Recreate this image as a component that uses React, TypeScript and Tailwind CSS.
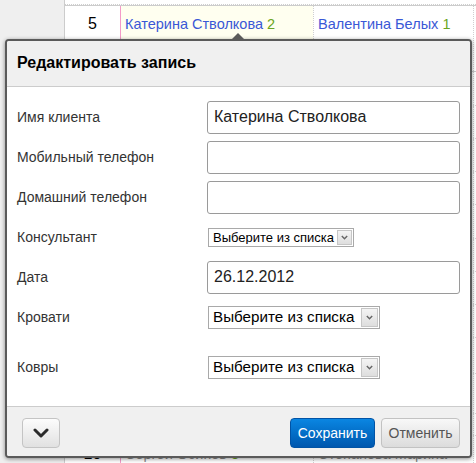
import React from "react";

const fillerRows = [34, 34, 34, 34, 34, 34, 34, 34, 37, 40, 23];

function SelectBox({ small }: { small?: boolean }) {
  // fake native select: text + grey arrow box on the right
  return (
    <div
      className={
        small
          ? "flex items-center w-[146px] h-[19px] border border-[#a9a9a9] bg-white"
          : "flex items-center w-[172px] h-[23px] border border-[#a9a9a9] bg-white"
      }
    >
      <span
        className={
          small
            ? "flex-1 pl-[4px] text-[13px] text-black leading-none whitespace-nowrap overflow-hidden"
            : "flex-1 pl-[4px] text-[15.2px] text-black leading-none whitespace-nowrap overflow-hidden"
        }
      >
        Выберите из списка
      </span>
      <span
        className={
          small
            ? "shrink-0 flex items-center justify-center w-[15px] h-[15px] mr-[1px] border border-[#c6c6c6] bg-linear-to-b from-[#f4f4f4] to-[#dedede]"
            : "shrink-0 flex items-center justify-center w-[17px] h-[19px] mr-[1px] border border-[#c6c6c6] bg-linear-to-b from-[#f4f4f4] to-[#dedede]"
        }
      >
        <svg width="7" height="5" viewBox="0 0 7 5">
          <polyline points="0.8,1 3.5,3.8 6.2,1" fill="none" stroke="#666" strokeWidth="1.4" />
        </svg>
      </span>
    </div>
  );
}

function TextField({ value }: { value?: string }) {
  return (
    <input
      readOnly
      value={value ?? ""}
      className="w-[253px] h-[33px] border border-[#9a9a9a] rounded-[3px] px-[6px] text-[16px] text-[#222] bg-white outline-none"
    />
  );
}

function Row({ label, children, extra }: { label: string; children: React.ReactNode; extra?: string }) {
  return (
    <div className={"flex items-center h-[40px] " + (extra ?? "")}>
      <div className="w-[190px] text-[14px] text-[#333]">{label}</div>
      {children}
    </div>
  );
}

export default function App() {
  return (
    <div className="relative w-[476px] h-[463px] overflow-hidden bg-white font-['Liberation_Sans',Arial,sans-serif]">
      {/* table behind the popover */}
      <div className="flex h-full">
        <div className="w-[65px] bg-[#efefef] border-r border-[#cccccc]" />
        <div className="flex-1 flex flex-col">
          <div className="h-[5px] border-b border-dotted border-[#cfcfcf]" />
          <div className="flex h-[69px] border-t border-b border-[#cccccc] border-b-dotted">
            <div className="w-[55px] pt-[9px] text-center text-[16px] leading-[18px] text-black">5</div>
            <div className="w-[193px] border-l border-[#f49ac8] bg-[#fffff0] pt-[9px] pl-[4px] text-[14.5px] leading-[18px] text-[#3a58d6]">
              Катерина Стволкова <span className="text-[#6aa521]">2</span>
            </div>
            <div className="w-[160px] border-l border-dotted border-[#cfcfcf] pt-[9px] pl-[4px] text-[14.5px] leading-[18px] text-[#3a58d6]">
              Валентина Белых <span className="text-[#6aa521]">1</span>
            </div>
            <div className="flex-1 border-l border-dotted border-[#cfcfcf]" />
          </div>
          {fillerRows.map((h, i) => (
            <div key={i} style={{ height: h }} className="flex border-b border-dotted border-[#d4d4d4]">
              <div className="w-[55px]" />
              <div className="w-[193px] border-l border-[#f49ac8]" />
              <div className="w-[160px] border-l border-dotted border-[#cfcfcf]" />
              <div className="flex-1 border-l border-dotted border-[#cfcfcf]" />
            </div>
          ))}
          <div className="flex flex-1">
            <div className="w-[55px] pt-[9px] text-center text-[16px] leading-[18px] text-black">10</div>
            <div className="w-[193px] border-l border-[#f49ac8] pt-[9px] pl-[4px] text-[14.5px] leading-[18px] text-[#8a8a8a]">
              Сергей Осипов <span className="text-[#6aa521]">3</span>
            </div>
            <div className="w-[160px] border-l border-dotted border-[#cfcfcf] pt-[9px] pl-[4px] text-[14.5px] leading-[18px] text-[#8a8a8a]">
              Степанова Марина
            </div>
            <div className="flex-1 border-l border-dotted border-[#cfcfcf]" />
          </div>
        </div>
      </div>

      {/* edit popover */}
      <div className="absolute left-[5px] top-[39px] w-[467px] h-[419px] flex flex-col border-2 border-[#5a5a5a] rounded-[4px] bg-white shadow-[0_1px_4px_rgba(0,0,0,0.45)] overflow-hidden">
        <div className="h-[46px] flex items-center pl-[10px] pb-[2px] bg-[#f0f0f0] border-b border-[#cccccc]">
          <h2 className="text-[16px] font-bold text-black">Редактировать запись</h2>
        </div>

        <div className="flex-1 pt-[10px] px-[10px]">
          <Row label="Имя клиента">
            <TextField value="Катерина Стволкова" />
          </Row>
          <Row label="Мобильный телефон">
            <TextField />
          </Row>
          <Row label="Домашний телефон">
            <TextField />
          </Row>
          <Row label="Консультант">
            <div className="pl-[1px]">
              <SelectBox small />
            </div>
          </Row>
          <Row label="Дата">
            <TextField value="26.12.2012" />
          </Row>
          <Row label="Кровати">
            <div className="pl-[1px]">
              <SelectBox />
            </div>
          </Row>
          <Row label="Ковры" extra="mt-[10px]">
            <div className="pl-[1px]">
              <SelectBox />
            </div>
          </Row>
        </div>

        <div className="h-[50px] flex items-start pt-[11px] pl-[15px] pr-[10px] bg-[#f0f0f0] border-t border-[#cccccc]">
          <button className="flex items-center justify-center w-[38px] h-[30px] rounded-[4px] border border-[#c4c4c4] bg-linear-to-b from-[#fcfcfc] to-[#e1e1e1]">
            <svg width="16" height="10" viewBox="0 0 16 10">
              <polyline points="2,2 8,8 14,2" fill="none" stroke="#2b2b2b" strokeWidth="3" strokeLinecap="round" strokeLinejoin="round" />
            </svg>
          </button>
          <div className="flex-1" />
          <button className="w-[85px] h-[30px] rounded-[4px] border border-[#0153a5] bg-linear-to-b from-[#0b86e2] to-[#0057ae] text-white text-[14px]">
            Сохранить
          </button>
          <button className="ml-[6px] w-[79px] h-[30px] rounded-[4px] border border-[#c2c2c2] bg-linear-to-b from-[#f8f8f8] to-[#dcdcdc] text-[#555] text-[14px]">
            Отменить
          </button>
        </div>
      </div>

      {/* pointer arrow */}
      <div className="absolute left-[231px] top-[33px] w-0 h-0 border-x-[7px] border-x-transparent border-b-[7px] border-b-[#5a5a5a]" />
    </div>
  );
}
